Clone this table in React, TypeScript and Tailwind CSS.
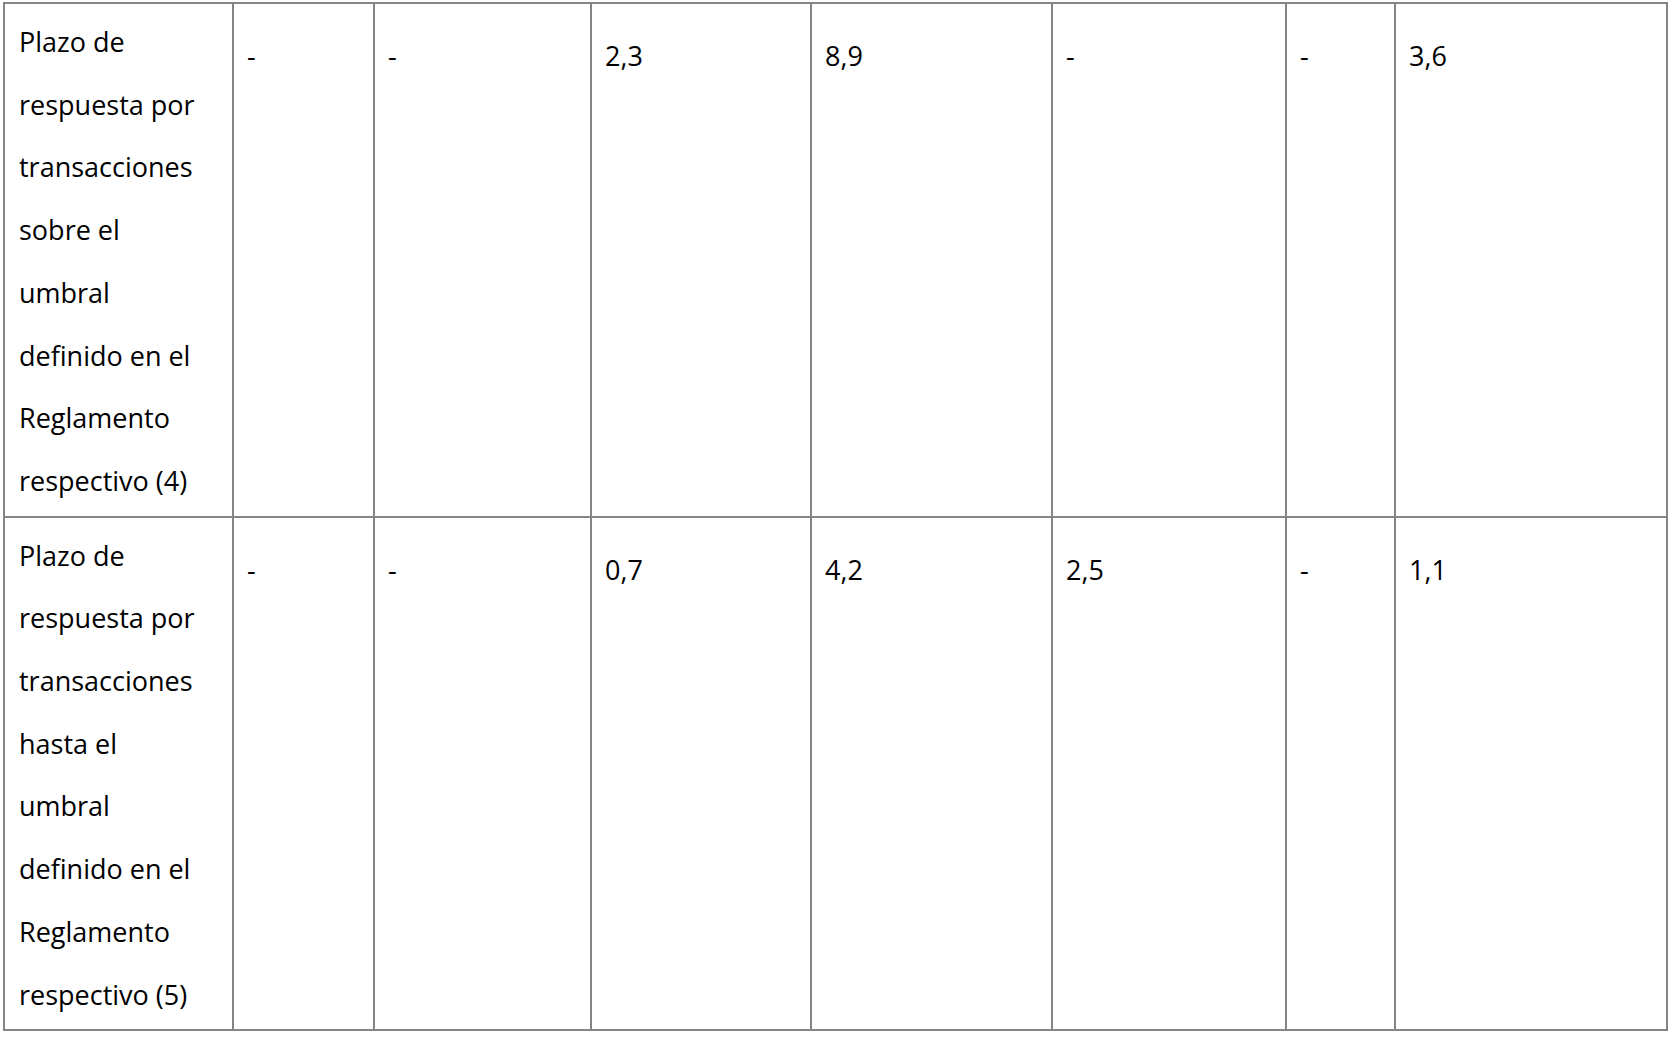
import React from 'react';

type Row = {
  label: string[];
  values: string[];
};

const rows: Row[] = [
  {
    label: [
      'Plazo de',
      'respuesta por',
      'transacciones',
      'sobre el',
      'umbral',
      'definido en el',
      'Reglamento',
      'respectivo (4)',
    ],
    values: ['-', '-', '2,3', '8,9', '-', '-', '3,6'],
  },
  {
    label: [
      'Plazo de',
      'respuesta por',
      'transacciones',
      'hasta el',
      'umbral',
      'definido en el',
      'Reglamento',
      'respectivo (5)',
    ],
    values: ['-', '-', '0,7', '4,2', '2,5', '-', '1,1'],
  },
];

// column widths measured between the grid lines
const colClasses = [
  'w-[229px]',
  'w-[141px]',
  'w-[217px]',
  'w-[220px]',
  'w-[241px]',
  'w-[234px]',
  'w-[109px]',
  'w-[272px]',
];

export default function App() {
  return (
    <div className="min-h-screen bg-white pl-[3px] pt-[2px] font-['Open_Sans',sans-serif]">
      <table className="w-[1665px] table-fixed border-collapse text-[27px] text-black">
        <colgroup>
          {colClasses.map((c, i) => (
            <col key={i} className={c} />
          ))}
        </colgroup>
        <tbody>
          {rows.map((row, r) => (
            <tr key={r}>
              <td className="border-2 border-[#858585] px-[14px] pt-[7px] pb-[3px] align-top leading-[62.7px]">
                {row.label.map((line, i) => (
                  <div key={i} className="whitespace-nowrap">
                    {line}
                  </div>
                ))}
              </td>
              {row.values.map((v, i) => (
                <td key={i} className="border-2 border-[#858585] px-[13px] pt-[21px] align-top leading-[62.7px]">
                  {v}
                </td>
              ))}
            </tr>
          ))}
        </tbody>
      </table>
    </div>
  );
}
